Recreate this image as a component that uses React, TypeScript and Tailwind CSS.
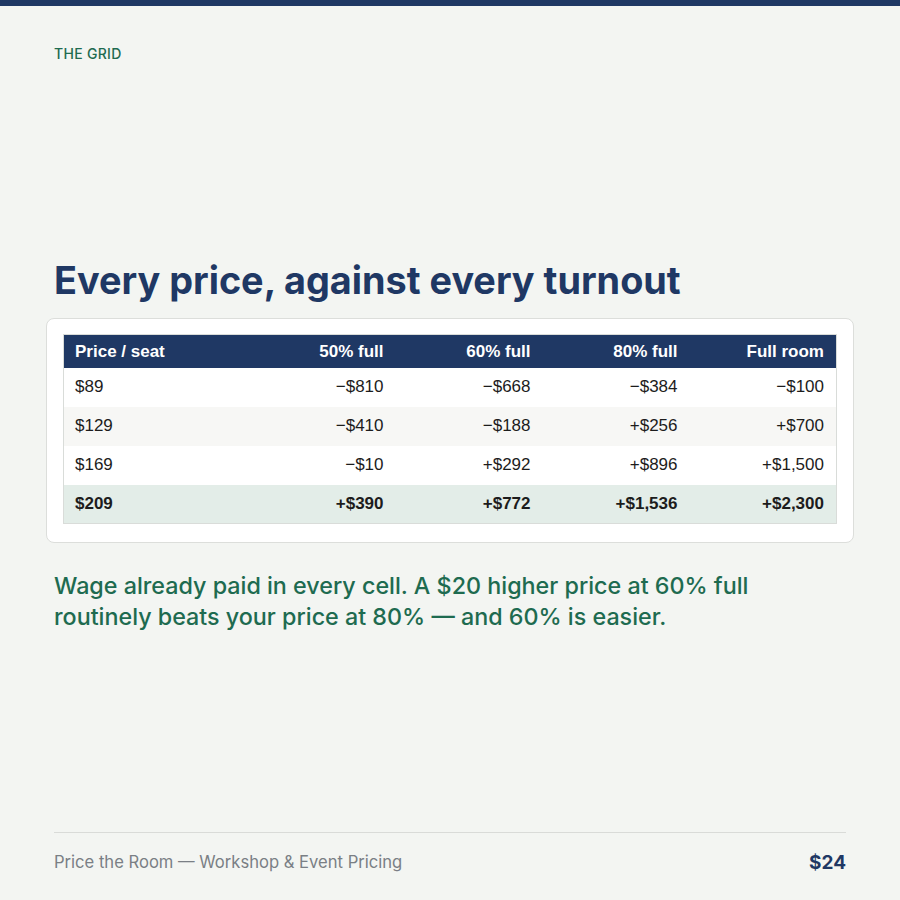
import React from 'react';

const rows = [
    { price: "$89", cells: ["−$810", "−$668", "−$384", "−$100"], bg: "bg-white" },
    { price: "$129", cells: ["−$410", "−$188", "+$256", "+$700"], bg: "bg-[#f7f7f5]" },
    { price: "$169", cells: ["−$10", "+$292", "+$896", "+$1,500"], bg: "bg-white" },
    { price: "$209", cells: ["+$390", "+$772", "+$1,536", "+$2,300"], bg: "bg-[#e3ede8] font-bold", },
];

const heads = ["50% full", "60% full", "80% full", "Full room"];

const App: React.FC = () => {
    return (
        <div className="w-[900px] h-[900px] bg-[#f3f5f2] flex flex-col font-['Inter',sans-serif] overflow-hidden">
            <div className="h-[6px] bg-[#1f3864]" />
            <div className="flex-1 flex flex-col px-[54px]">
                <div className="mt-[40px] text-[14px] leading-[16px] text-[#1e6b50] font-medium tracking-[0.3px]">THE GRID</div>

                <h1 className="mt-[196px] text-[37.8px] leading-[44px] font-bold text-[#1f3864] tracking-[0px]">
                    Every price, against every turnout
                </h1>

                <div className="mt-[16px] -mx-[8px] bg-white border border-[#dcdedb] rounded-[8px] px-[16px] pt-[15px] pb-[18px]">
                    <table className="w-full table-fixed border border-[#d9dcd9] border-collapse font-['Liberation_Sans',Arial,sans-serif] text-[17px] text-[#1c1c1c]">
                        <colgroup>
                            <col className="w-[185px]" />
                            <col className="w-[147px]" />
                            <col className="w-[147px]" />
                            <col className="w-[147px]" />
                            <col className="w-[147px]" />
                        </colgroup>
                        <thead>
                            <tr className="bg-[#1f3864] text-white h-[33px]">
                                <th className="text-left font-bold px-[11px]">Price / seat</th>
                                {heads.map(h => <th key={h} className="text-right font-bold px-[12px]">{h}</th>)}
                            </tr>
                        </thead>
                        <tbody>
                            {rows.map(r => (
                                <tr key={r.price} className={`h-[39px] ${r.bg}`}>
                                    <td className="text-left px-[11px]">{r.price}</td>
                                    {r.cells.map((c, i) => <td key={i} className="text-right px-[12px]">{c}</td>)}
                                </tr>
                            ))}
                        </tbody>
                    </table>
                </div>

                <p className="mt-[27px] text-[23.3px] leading-[31px] text-[#1e6b50] font-medium max-w-[760px]">
                    Wage already paid in every cell. A $20 higher price at 60% full routinely beats your price at 80% — and 60% is easier.
                </p>

                <div className="mt-auto mb-[23px] border-t border-[#d9dbd8] pt-[16px] flex items-center justify-between">
                    <span className="text-[16.6px] text-[#7a7f85]">Price the Room — Workshop &amp; Event Pricing</span>
                    <span className="text-[19px] font-bold text-[#1f3864]">$24</span>
                </div>
            </div>
        </div>
    );
};

export default App;
